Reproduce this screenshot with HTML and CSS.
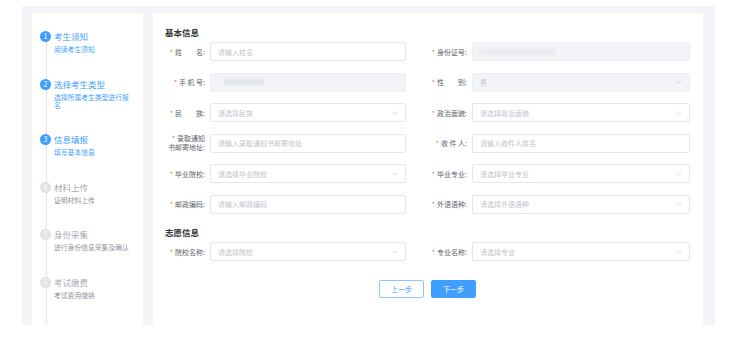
FILE: index.html
```html
<!DOCTYPE html>
<html lang="zh-CN">
<head>
<meta charset="UTF-8">
<title>报名 - 信息填报</title>
<link rel="stylesheet" href="styles.css">
</head>
<body>
<div class="page">
  <aside class="steps">
    <ul class="step-list">
      <li class="step done">
        <span class="step-num">1</span>
        <div class="step-body">
          <div class="step-title">考生须知</div>
          <div class="step-desc">阅读考生须知</div>
        </div>
      </li>
      <li class="step done">
        <span class="step-num">2</span>
        <div class="step-body">
          <div class="step-title">选择考生类型</div>
          <div class="step-desc">选择所属考生类型进行报名</div>
        </div>
      </li>
      <li class="step done">
        <span class="step-num">3</span>
        <div class="step-body">
          <div class="step-title">信息填报</div>
          <div class="step-desc">填写基本信息</div>
        </div>
      </li>
      <li class="step">
        <span class="step-num">4</span>
        <div class="step-body">
          <div class="step-title">材料上传</div>
          <div class="step-desc">证明材料上传</div>
        </div>
      </li>
      <li class="step">
        <span class="step-num">5</span>
        <div class="step-body">
          <div class="step-title">身份采集</div>
          <div class="step-desc">进行身份信息采集及确认</div>
        </div>
      </li>
      <li class="step">
        <span class="step-num">6</span>
        <div class="step-body">
          <div class="step-title">考试缴费</div>
          <div class="step-desc">考试费用缴纳</div>
        </div>
      </li>
    </ul>
  </aside>

  <main class="main">
    <h3 class="section-title">基本信息</h3>
    <div class="form-grid">
      <div class="form-item">
        <label class="label"><i>*</i>姓&emsp;&emsp;名:</label>
        <div class="input"><span class="ph">请输入姓名</span></div>
      </div>
      <div class="form-item">
        <label class="label"><i>*</i>身份证号:</label>
        <div class="input disabled"><span class="mask mask-id"></span></div>
      </div>

      <div class="form-item">
        <label class="label"><i>*</i>手 机 号:</label>
        <div class="input disabled"><span class="mask mask-phone"></span></div>
      </div>
      <div class="form-item">
        <label class="label"><i>*</i>性&emsp;&emsp;别:</label>
        <div class="input select disabled"><span class="ph">男</span><svg class="arrow" viewBox="0 0 10 6"><polyline points="1,1 5,5 9,1"/></svg></div>
      </div>

      <div class="form-item">
        <label class="label"><i>*</i>民&emsp;&emsp;族:</label>
        <div class="input select"><span class="ph">请选择民族</span><svg class="arrow" viewBox="0 0 10 6"><polyline points="1,1 5,5 9,1"/></svg></div>
      </div>
      <div class="form-item">
        <label class="label"><i>*</i>政治面貌:</label>
        <div class="input select"><span class="ph">请选择政治面貌</span><svg class="arrow" viewBox="0 0 10 6"><polyline points="1,1 5,5 9,1"/></svg></div>
      </div>

      <div class="form-item">
        <label class="label two-line"><span><i>*</i>录取通知</span><span>书邮寄地址:</span></label>
        <div class="input"><span class="ph">请输入录取通知书邮寄地址</span></div>
      </div>
      <div class="form-item">
        <label class="label"><i>*</i>收 件 人:</label>
        <div class="input"><span class="ph">请输入收件人姓名</span></div>
      </div>

      <div class="form-item">
        <label class="label"><i>*</i>毕业院校:</label>
        <div class="input select"><span class="ph">请选择毕业院校</span><svg class="arrow" viewBox="0 0 10 6"><polyline points="1,1 5,5 9,1"/></svg></div>
      </div>
      <div class="form-item">
        <label class="label"><i>*</i>毕业专业:</label>
        <div class="input select"><span class="ph">请选择毕业专业</span><svg class="arrow" viewBox="0 0 10 6"><polyline points="1,1 5,5 9,1"/></svg></div>
      </div>

      <div class="form-item">
        <label class="label"><i>*</i>邮政编码:</label>
        <div class="input"><span class="ph">请输入邮政编码</span></div>
      </div>
      <div class="form-item">
        <label class="label"><i>*</i>外语语种:</label>
        <div class="input select"><span class="ph">请选择外语语种</span><svg class="arrow" viewBox="0 0 10 6"><polyline points="1,1 5,5 9,1"/></svg></div>
      </div>
    </div>

    <h3 class="section-title">志愿信息</h3>
    <div class="form-grid">
      <div class="form-item">
        <label class="label"><i>*</i>院校名称:</label>
        <div class="input select"><span class="ph">请选择院校</span><svg class="arrow" viewBox="0 0 10 6"><polyline points="1,1 5,5 9,1"/></svg></div>
      </div>
      <div class="form-item">
        <label class="label"><i>*</i>专业名称:</label>
        <div class="input select"><span class="ph">请选择专业</span><svg class="arrow" viewBox="0 0 10 6"><polyline points="1,1 5,5 9,1"/></svg></div>
      </div>
    </div>

    <div class="actions">
      <button class="btn btn-plain">上一步</button>
      <button class="btn btn-primary">下一步</button>
    </div>
  </main>
</div>
</body>
</html>
```

FILE: styles.css
```css
html, body {
    margin: 0;
    background: #ffffff;
    font-family: "Noto Sans CJK SC", "Noto Sans", sans-serif;
    font-size: 7px;
    color: #606266;
}
.page {
    display: flex;
    gap: 10px;
    width: 693px;
    height: 319px;
    margin: 6px 0 0 22px;
    padding: 7px 12px 0 10px;
    box-sizing: border-box;
    background: #f3f4f8;
}

/* left steps */
.steps {
    width: 111px;
    background: #ffffff;
    flex-shrink: 0;
}
.step-list {
    position: relative;
    list-style: none;
    margin: 0;
    padding: 17px 0 0 8px;
    height: 100%;
    box-sizing: border-box;
}
.step-list::before {
    content: "";
    position: absolute;
    left: 14px;
    top: 23px;
    bottom: 0;
    width: 1px;
    background: #e4e7ed;
}
.step {
    position: relative;
    display: flex;
    gap: 3px;
    padding-bottom: 24.6px;
}
.step-num {
    width: 11px;
    height: 11px;
    margin-top: 1px;
    border-radius: 50%;
    background: #dfe2e8;
    color: #ffffff;
    font-size: 7px;
    line-height: 11px;
    text-align: center;
    flex-shrink: 0;
}
.step-body {
    width: 79px;
}
.step-title {
    font-size: 8.5px;
    line-height: 12px;
    color: #a8abb2;
}
.step-desc {
    margin-top: 3px;
    font-size: 6.8px;
    line-height: 8px;
    color: #909399;
}
.step.done .step-num {
    background: #409eff;
}
.step.done .step-title,
.step.done .step-desc {
    color: #409eff;
}

/* main form */
.main {
    flex: 1;
    background: #ffffff;
    padding: 12px 13px 0 12px;
}
.section-title {
    margin: 0 0 3px;
    font-size: 8.5px;
    line-height: 14px;
    font-weight: bold;
    color: #303133;
}
.form-grid {
    display: grid;
    grid-template-columns: 241px 263px;
    column-gap: 21px;
}
.form-item {
    display: flex;
    align-items: center;
    height: 19px;
    margin-bottom: 11.5px;
}
.label {
    width: 45px;
    padding-right: 5px;
    box-sizing: border-box;
    text-align: right;
    white-space: nowrap;
    color: #606266;
    flex-shrink: 0;
}
.label i {
    font-style: normal;
    color: #f56c6c;
    margin-right: 2px;
}
.label.two-line {
    display: flex;
    flex-direction: column;
    line-height: 9px;
}
.input {
    flex: 1;
    display: flex;
    align-items: center;
    justify-content: space-between;
    height: 19px;
    padding: 0 7px;
    box-sizing: border-box;
    border: 1px solid #e4e7ed;
    border-radius: 2px;
    background: #ffffff;
}
.input.disabled {
    background: #f3f4f8;
    border-color: #eceef3;
}
.ph {
    color: #c0c4cc;
}
.arrow {
    width: 6px;
    height: 4px;
    fill: none;
    stroke: #c0c4cc;
    stroke-width: 1;
}
.mask {
    display: block;
    height: 6px;
    background: #e3e6ec;
    filter: blur(1px);
}
.mask-phone {
    width: 40px;
    margin-left: 6px;
}
.mask-id {
    width: 76px;
    background: #ebedf2;
}

.actions {
    display: flex;
    justify-content: center;
    gap: 7px;
    margin-top: 7px;
}
.btn {
    height: 18px;
    padding: 0 11px;
    font-family: inherit;
    font-size: 7px;
    border-radius: 2px;
    border: 1px solid #409eff;
    cursor: pointer;
}
.btn-plain {
    background: #ffffff;
    color: #409eff;
    border-color: #8cc5ff;
}
.btn-primary {
    background: #409eff;
    color: #ffffff;
}
```
